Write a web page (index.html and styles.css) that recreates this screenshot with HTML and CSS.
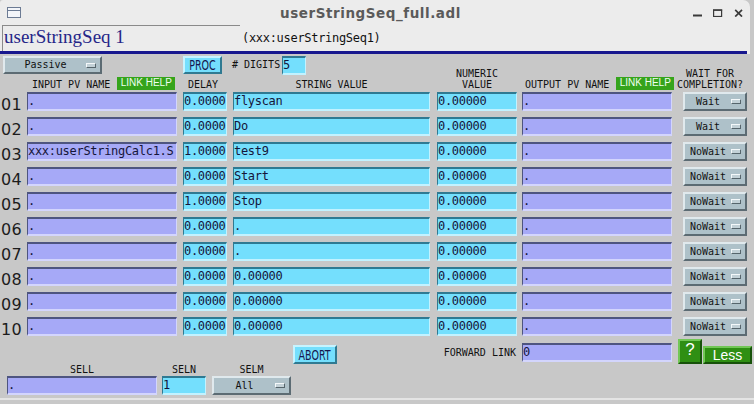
FILE: index.html
```html
<!DOCTYPE html>
<html>
<head>
<meta charset="utf-8">
<title>userStringSeq_full.adl</title>
<link rel="stylesheet" href="styles.css">
</head>
<body>
<div class="window">
  <div class="top">
    <div class="titlebar">
      <div class="tb-left">
        <svg class="app-icon" width="14" height="11" viewBox="0 0 14 11"><rect x="0.5" y="0.5" width="13" height="10" fill="#f3f5f9" stroke="#6c7b94"/><line x1="1" y1="3.5" x2="13" y2="3.5" stroke="#6c7b94"/></svg>
      </div>
      <div class="tb-title">userStringSeq_full.adl</div>
      <div class="tb-controls">
        <svg class="ctl ctl-min" width="10" height="10" viewBox="0 0 10 10"><line x1="0" y1="8.5" x2="9" y2="8.5" stroke="#3a3a3a" stroke-width="2"/></svg>
        <svg class="ctl ctl-max" width="10" height="10" viewBox="0 0 10 10"><rect x="0.6" y="3.2" width="8" height="6.3" fill="none" stroke="#3a3a3a" stroke-width="1.2"/><line x1="0" y1="3" x2="9.2" y2="3" stroke="#3a3a3a" stroke-width="1.4"/></svg>
        <svg class="ctl ctl-close" width="10" height="10" viewBox="0 0 10 10"><path d="M1.2 2.8 L8 9.6 M8 2.8 L1.2 9.6" stroke="#3a3a3a" stroke-width="1.7"/></svg>
      </div>
    </div>
    <div class="header">
      <div class="name-field">userStringSeq 1</div>
      <div class="pv-name">(xxx:userStringSeq1)</div>
    </div>
    <div class="rule"></div>
  </div>

  <div class="panel">
    <div class="controls">
      <div class="menu m-passive"><span class="menu-text">Passive</span><span class="menu-ind"></span></div>
      <div class="btn btn-cyan b-proc"><span class="btn-label">PROC</span></div>
      <div class="lbl digits-label"># DIGITS</div>
      <div class="field cyan digits">5</div>
    </div>

    <div class="head">
      <div></div>
      <div class="h-input"><span class="lbl">INPUT PV NAME</span><span class="linkhelp">LINK HELP</span></div>
      <div class="lbl h-delay">DELAY</div>
      <div class="lbl h-center c-str">STRING VALUE</div>
      <div class="lbl h-center c-num">NUMERIC<br>VALUE</div>
      <div class="h-output"><span class="lbl">OUTPUT PV NAME</span><span class="linkhelp">LINK HELP</span></div>
      <div class="lbl h-wait">WAIT FOR<br>COMPLETION?</div>
    </div>

    <div class="rows">
      <div class="row"><div class="num">01</div><div class="field lav c-in">.</div><div class="field cyan c-del">0.0000</div><div class="field cyan c-str">flyscan</div><div class="field cyan c-num">0.00000</div><div class="field lav c-out">.</div><div class="menu c-menu"><span class="menu-text">Wait</span><span class="menu-ind"></span></div></div>
      <div class="row"><div class="num">02</div><div class="field lav c-in">.</div><div class="field cyan c-del">0.0000</div><div class="field cyan c-str">Do</div><div class="field cyan c-num">0.00000</div><div class="field lav c-out">.</div><div class="menu c-menu"><span class="menu-text">Wait</span><span class="menu-ind"></span></div></div>
      <div class="row"><div class="num">03</div><div class="field lav c-in">xxx:userStringCalc1.S</div><div class="field cyan c-del">1.0000</div><div class="field cyan c-str">test9</div><div class="field cyan c-num">0.00000</div><div class="field lav c-out">.</div><div class="menu c-menu"><span class="menu-text">NoWait</span><span class="menu-ind"></span></div></div>
      <div class="row"><div class="num">04</div><div class="field lav c-in">.</div><div class="field cyan c-del">0.0000</div><div class="field cyan c-str">Start</div><div class="field cyan c-num">0.00000</div><div class="field lav c-out">.</div><div class="menu c-menu"><span class="menu-text">NoWait</span><span class="menu-ind"></span></div></div>
      <div class="row"><div class="num">05</div><div class="field lav c-in">.</div><div class="field cyan c-del">1.0000</div><div class="field cyan c-str">Stop</div><div class="field cyan c-num">0.00000</div><div class="field lav c-out">.</div><div class="menu c-menu"><span class="menu-text">NoWait</span><span class="menu-ind"></span></div></div>
      <div class="row"><div class="num">06</div><div class="field lav c-in">.</div><div class="field cyan c-del">0.0000</div><div class="field cyan c-str">.</div><div class="field cyan c-num">0.00000</div><div class="field lav c-out">.</div><div class="menu c-menu"><span class="menu-text">NoWait</span><span class="menu-ind"></span></div></div>
      <div class="row"><div class="num">07</div><div class="field lav c-in">.</div><div class="field cyan c-del">0.0000</div><div class="field cyan c-str">.</div><div class="field cyan c-num">0.00000</div><div class="field lav c-out">.</div><div class="menu c-menu"><span class="menu-text">NoWait</span><span class="menu-ind"></span></div></div>
      <div class="row"><div class="num">08</div><div class="field lav c-in">.</div><div class="field cyan c-del">0.0000</div><div class="field cyan c-str">0.00000</div><div class="field cyan c-num">0.00000</div><div class="field lav c-out">.</div><div class="menu c-menu"><span class="menu-text">NoWait</span><span class="menu-ind"></span></div></div>
      <div class="row"><div class="num">09</div><div class="field lav c-in">.</div><div class="field cyan c-del">0.0000</div><div class="field cyan c-str">0.00000</div><div class="field cyan c-num">0.00000</div><div class="field lav c-out">.</div><div class="menu c-menu"><span class="menu-text">NoWait</span><span class="menu-ind"></span></div></div>
      <div class="row"><div class="num">10</div><div class="field lav c-in">.</div><div class="field cyan c-del">0.0000</div><div class="field cyan c-str">0.00000</div><div class="field cyan c-num">0.00000</div><div class="field lav c-out">.</div><div class="menu c-menu"><span class="menu-text">NoWait</span><span class="menu-ind"></span></div></div>
    </div>

    <div class="bottom-a">
      <div class="btn btn-cyan b-abort"><span class="btn-label">ABORT</span></div>
      <div class="lbl fwd-label">FORWARD LINK</div>
      <div class="field lav fwd-field">0</div>
      <div class="btn btn-green b-help">?</div>
      <div class="btn btn-green b-less">Less</div>
    </div>

    <div class="bottom-b">
      <div class="grp g-sell"><div class="lbl grp-label">SELL</div><div class="field lav g-field">.</div></div>
      <div class="grp g-seln"><div class="lbl grp-label">SELN</div><div class="field cyan g-field">1</div></div>
      <div class="grp g-selm"><div class="lbl grp-label">SELM</div><div class="menu g-field"><span class="menu-text">All</span><span class="menu-ind"></span></div></div>
    </div>
  </div>
  <div class="bottom-edge"></div>
</div>
</body>
</html>
```

FILE: styles.css
```css
* { box-sizing: border-box; }
html, body { margin: 0; padding: 0; }
body {
  width: 754px;
  height: 404px;
  overflow: hidden;
  background: #c8c8c8;
  font-family: "DejaVu Sans Mono", monospace;
  color: #111;
}
.window { width: 754px; height: 404px; display: flex; flex-direction: column; }

/* window top: title bar + name header */
.top {
  width: 750px;
  background: #ececec;
  border-top-left-radius: 3px;
  border-top-right-radius: 7px;
}
.titlebar {
  height: 24px;
  display: grid;
  grid-template-columns: 1fr auto 1fr;
  align-items: center;
}
.tb-left { display: flex; align-items: center; }
.app-icon { display: block; margin-left: 7px; }
.tb-title {
  font-family: "DejaVu Sans", sans-serif;
  font-weight: 700;
  font-size: 13.5px;
  letter-spacing: 0.55px;
  color: #5a5a5a;
  margin-right: 9px;
  padding-top: 1px;
}
.tb-controls { display: flex; justify-content: flex-end; align-items: center; }
.ctl { display: block; }
.ctl-max { margin-left: 10px; }
.ctl-close { margin-left: 11px; margin-right: 6px; }

.header { height: 27px; display: flex; }
.name-field {
  width: 238px;
  height: 26px;
  margin: 1px 0 0 2px;
  border-top: 1px solid #8a8a8a;
  border-left: 1px solid #8a8a8a;
  padding-left: 1px;
  font-family: "Liberation Serif", serif;
  font-size: 19px;
  line-height: 22px;
  color: #262688;
}
.pv-name {
  margin-left: 2px;
  padding-top: 7px;
  line-height: 14px;
  font-size: 12px;
  letter-spacing: -0.3px;
  color: #111;
}
.rule { height: 3px; width: 747px; background: #17178e; }

/* main panel */
.panel { height: 344px; background: #c8c8c8; padding-top: 2px; }

.lbl { font-size: 10px; line-height: 11px; color: #111; white-space: nowrap; }

.controls { display: flex; height: 18px; padding-left: 3px; }
.m-passive { width: 99px; height: 18px; }
.b-proc { width: 39px; height: 18px; margin-left: 81px; }
.digits-label { width: 48px; margin-left: 10px; line-height: 18px; }
.digits { width: 24px; height: 18px; margin-left: 2px; font-size: 13px; }

/* column header */
.head {
  display: grid;
  grid-template-columns: 27px 156px 50px 204px 85px 161px 64px;
  grid-template-rows: 18px;
  align-items: end;
}
.head > * { margin-bottom: 2px; }
.h-input { display: flex; align-items: flex-end; padding-left: 5px; }
.h-output { display: flex; align-items: flex-end; padding-left: 3px; }
.linkhelp {
  width: 58px;
  height: 13px;
  margin-left: 7px;
  background: #35a41b;
  color: #effff0;
  font-family: "Liberation Sans", sans-serif;
  font-size: 10px;
  line-height: 12px;
  text-align: center;
}
.h-delay { padding-left: 5px; }
.h-center { text-align: center; }
.h-wait { text-align: center; width: 72px; margin-left: -9px; }

/* data rows */
.rows { display: flex; flex-direction: column; gap: 6px; }
.row {
  display: grid;
  grid-template-columns: 27px 156px 50px 204px 85px 161px 64px;
  grid-template-rows: 19px;
}
.num {
  font-family: "DejaVu Sans", sans-serif;
  font-size: 16px;
  line-height: 26px;
  padding-left: 1px;
  color: #1c1c1c;
  letter-spacing: 0.3px;
}

.field {
  height: 19px;
  border-style: solid;
  border-width: 2px 1px 2px 1px;
  display: flex;
  align-items: center;
  font-size: 12px;
  letter-spacing: -0.3px;
  color: #15153a;
  white-space: nowrap;
  overflow: hidden;
  padding-bottom: 1px;
}
.lav { background: #a6a9f7; border-color: #4e5580 #d3d5fd #d3d5fd #4e5580; }
.cyan { background: #74dffd; border-color: #2f7a92 #c2f2ff #c2f2ff #2f7a92; }

.c-in { width: 150px; }
.c-del { width: 44px; }
.c-str { width: 197px; }
.c-num { width: 80px; }
.c-out { width: 150px; }
.c-menu { width: 64px; height: 19px; }

/* menus */
.menu {
  display: flex;
  align-items: center;
  background: #aec1c9;
  border: 2px solid;
  border-color: #e0e9ed #5c6b73 #5c6b73 #e0e9ed;
}
.menu-text { flex: 1; text-align: center; font-size: 10px; line-height: 12px; color: #111; }
.menu-ind {
  width: 10px;
  height: 5px;
  margin-right: 4px;
  background: #c3d1d7;
  border-style: solid;
  border-width: 1px;
  border-color: #f4f8fa #56656c #56656c #f4f8fa;
}

/* buttons */
.btn {
  display: flex;
  align-items: center;
  justify-content: center;
  border: 2px solid;
}
.btn-cyan { background: #74dffd; border-color: #c6f4ff #2f7a92 #2f7a92 #c6f4ff; color: #17174e; }
.btn-label {
  display: inline-block;
  font-family: "DejaVu Sans", sans-serif;
  font-size: 14px;
  line-height: 14px;
  transform: scaleX(0.68);
}
.btn-green {
  background: #2f8f13;
  border-color: #72c756 #17520a #17520a #72c756;
  color: #ffffff;
  font-family: "Liberation Sans", sans-serif;
}

/* bottom area */
.bottom-a { display: flex; align-items: flex-start; height: 28px; padding-top: 3px; }
.b-abort { width: 44px; height: 19px; margin-left: 293px; margin-top: 6px; }
.fwd-label { width: 185px; height: 19px; margin-top: 4px; line-height: 19px; text-align: right; padding-right: 6px; }
.fwd-field { width: 150px; margin-top: 4px; }
.b-help { width: 24px; height: 25px; margin-left: 6px; font-size: 17px; padding-bottom: 3px; }
.b-less { width: 49px; height: 18px; margin-left: 1px; margin-top: 7px; font-size: 14px; }

.bottom-b { display: flex; }
.grp { display: flex; flex-direction: column; align-items: center; }
.grp-label { line-height: 12px; }
.g-field { width: 100%; height: 19px; }
.g-sell { width: 150px; margin-left: 7px; }
.g-seln { width: 44px; margin-left: 5px; }
.g-selm { width: 79px; margin-left: 6px; }

.bottom-edge { height: 2px; width: 754px; background: #e4e4e4; }
```
